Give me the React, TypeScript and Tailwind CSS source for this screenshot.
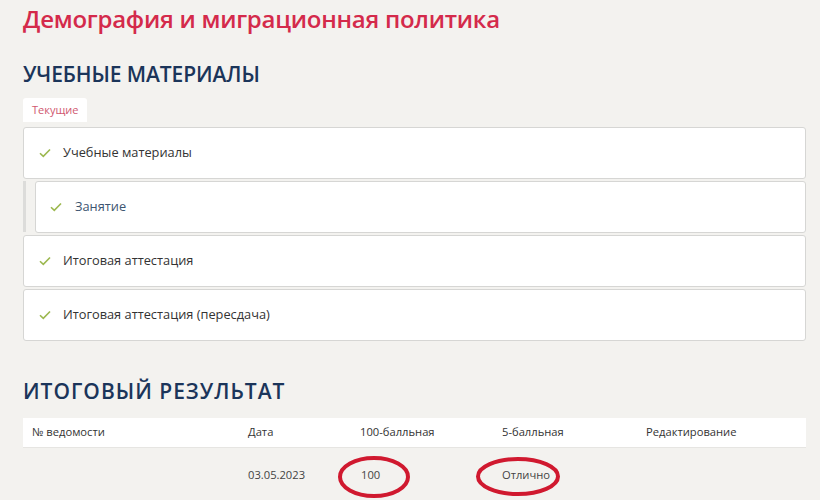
import React from "react";

const Check = ({ className = "" }: { className?: string }) => (
  <svg width="12" height="10" viewBox="0 0 12 10" className={className}>
    <path d="M1 5.2 L4.3 8.4 L11 1.5" fill="none" stroke="#9cb84f" strokeWidth="1.6" />
  </svg>
);

const Card = ({ children }: { children: React.ReactNode }) => (
  <div className="h-[52px] bg-white border border-[#d6d6d4] rounded-[3px] flex items-center">
    {children}
  </div>
);

export default function App() {
  return (
    <div
      className="w-[820px] h-[500px] bg-[#f3f2ef] overflow-hidden pl-[23px] pr-[14px]"
      style={{ fontFamily: '"Open Sans", "Liberation Sans", sans-serif' }}
    >
      <h1 className="pt-[4px] text-[24px] leading-[30px] font-semibold text-[#d42a4b] tracking-[-0.25px]">
        Демография и миграционная политика
      </h1>
      <h2 className="mt-[27px] text-[21px] leading-[26px] font-semibold text-[#1b355a] tracking-[-0.1px]">
        УЧЕБНЫЕ МАТЕРИАЛЫ
      </h2>
      <div className="mt-[11px] flex">
        <div className="bg-white h-[24px] px-[9px] flex items-center text-[11px] text-[#d0586f] rounded-t-[3px]">
          Текущие
        </div>
      </div>
      <div className="mt-[5px] flex flex-col gap-[2px]">
        <Card>
          <Check className="ml-[15px]" />
          <span className="ml-[12px] text-[12.8px] text-[#333]">Учебные материалы</span>
        </Card>
        <div className="flex">
          <div className="w-[3px] bg-[#dcdcda] h-[51px]" />
          <div className="flex-1 ml-[9px] h-[52px] bg-white border border-[#d6d6d4] rounded-[3px] flex items-center">
            <Check className="ml-[14px]" />
            <span className="ml-[13px] text-[12.8px] text-[#3d5570]">Занятие</span>
          </div>
        </div>
        <Card>
          <Check className="ml-[15px]" />
          <span className="ml-[12px] text-[12.8px] text-[#333]">Итоговая аттестация</span>
        </Card>
        <Card>
          <Check className="ml-[15px]" />
          <span className="ml-[12px] text-[12.8px] text-[#333]">Итоговая аттестация (пересдача)</span>
        </Card>
      </div>
      <h2 className="mt-[37px] text-[21px] leading-[26px] font-semibold text-[#1b355a] tracking-[1px]">
        ИТОГОВЫЙ РЕЗУЛЬТАТ
      </h2>
      <div className="mt-[14px] bg-white h-[30px] grid grid-cols-[225px_112px_142px_144px_1fr] items-center text-[11.2px] text-[#333] border-b border-[#e6e5e2]">
        <span className="pl-[9px]">№ ведомости</span>
        <span>Дата</span>
        <span>100-балльная</span>
        <span>5-балльная</span>
        <span>Редактирование</span>
      </div>
      <div className="relative h-[54px] grid grid-cols-[225px_112px_142px_144px_1fr] items-center text-[11.2px] text-[#444]">
        <span />
        <span>03.05.2023</span>
        <span className="pl-[1px]">100</span>
        <span>Отлично</span>
        <span />
        <svg className="absolute left-[313px] top-[6px]" width="76" height="46" viewBox="0 0 76 46">
          <ellipse cx="38" cy="23" rx="34" ry="19" fill="none" stroke="#d0192f" strokeWidth="4" />
        </svg>
        <svg className="absolute left-[451px] top-[7px]" width="88" height="43" viewBox="0 0 88 43">
          <ellipse cx="44" cy="21.5" rx="40" ry="17.5" fill="none" stroke="#d0192f" strokeWidth="4" />
        </svg>
      </div>
    </div>
  );
}
